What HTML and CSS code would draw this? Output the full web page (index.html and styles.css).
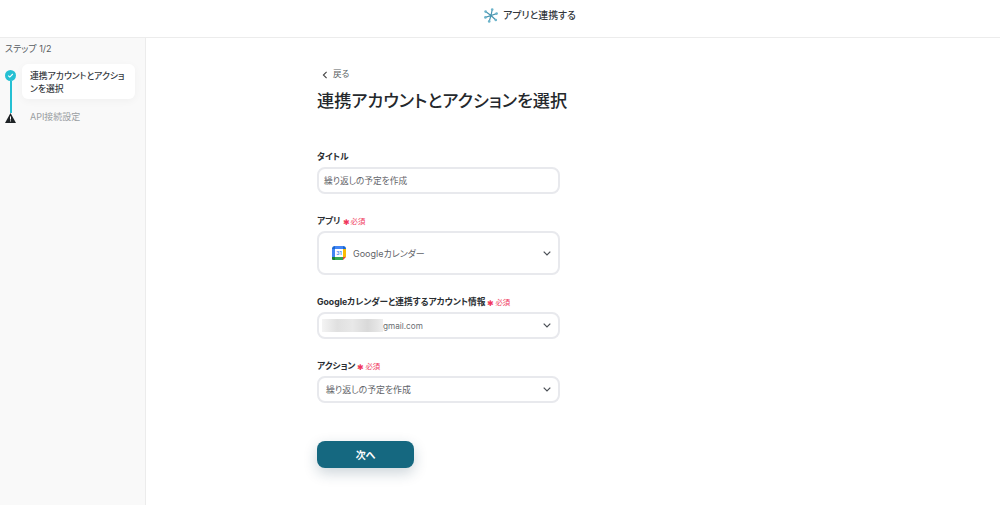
FILE: index.html
```html
<!DOCTYPE html>
<html lang="ja">
<head>
<meta charset="utf-8">
<title>アプリと連携する</title>
<link rel="stylesheet" href="styles.css">
</head>
<body>
<header class="topbar">
  <svg class="logo" width="14" height="15" viewBox="0 0 14 15" aria-hidden="true">
    <g stroke="#4a95b0" stroke-width="1.2" stroke-linecap="round" fill="#6db4cb">
      <path d="M7 7.5 8.2 1.6M7 7.5 1.6 3.6M7 7.5 12.6 5.6M7 7.5 1.4 9.4M7 7.5 5.2 13.4M7 7.5 11.8 12" fill="none"/>
    </g>
    <g fill="#6db4cb">
      <circle cx="8.2" cy="1.6" r="1.3"/><circle cx="1.6" cy="3.6" r="1.3"/><circle cx="12.6" cy="5.6" r="1.3"/><circle cx="1.4" cy="9.4" r="1.3"/><circle cx="5.2" cy="13.4" r="1.3"/><circle cx="11.8" cy="12" r="1.3"/>
    </g>
  </svg>
  <span class="topbar-title">アプリと連携する</span>
</header>
<div class="layout">
  <aside class="sidebar">
    <div class="step-count">ステップ 1/2</div>
    <ol class="steps">
      <li class="step step-active">
        <span class="step-marker">
          <svg width="11" height="11" viewBox="0 0 11 11" aria-hidden="true"><circle cx="5.5" cy="5.5" r="5.5" fill="#25c0d3"/><path d="M3.2 5.6 4.8 7.1 7.8 4" fill="none" stroke="#fff" stroke-width="1.1"/></svg>
          <span class="step-line"></span>
        </span>
        <div class="step-card">連携アカウントとアクションを選択</div>
      </li>
      <li class="step">
        <span class="step-marker">
          <svg width="11" height="10" viewBox="0 0 11 10" aria-hidden="true"><path d="M5.5 0 11 10H0Z" fill="#1f2326"/><path d="M5.5 3.4v3.2M5.5 7.4v1" stroke="#fff" stroke-width="1"/></svg>
        </span>
        <div class="step-plain">API接続設定</div>
      </li>
    </ol>
  </aside>
  <main class="main">
    <div class="form">
      <a class="back"><svg width="6" height="8" viewBox="0 0 6 8" aria-hidden="true"><path d="M4.6.8 1.4 4l3.2 3.2" fill="none" stroke="#444" stroke-width="1.1"/></svg>戻る</a>
      <h1 class="heading">連携アカウントとアクションを選択</h1>
      <div class="field field-title">
        <label class="label">タイトル</label>
        <div class="box box-input">繰り返しの予定を作成</div>
      </div>
      <div class="field">
        <label class="label">アプリ<span class="req"><i>✱</i>必須</span></label>
        <div class="box box-app">
          <span class="app">
            <svg width="14" height="14" viewBox="0 0 14 14" aria-hidden="true">
              <path d="M3 0h8v3H3z" fill="#4285f4"/><path d="M0 3a3 3 0 0 1 3-3v3z" fill="#1967d2"/>
              <path d="M0 3h3v8H0z" fill="#4285f4"/><path d="M11 3h3v8h-3z" fill="#fbbc04"/>
              <path d="M3 11h8v3H3z" fill="#34a853"/><path d="M0 11h3v3H1a1 1 0 0 1-1-1z" fill="#188038"/>
              <path d="M11 0a3 3 0 0 1 3 3h-3z" fill="#1967d2"/><path d="M11 14v-3h3z" fill="#ea4335"/>
              <path d="M3 3h8v8H3z" fill="#fff"/>
              <text x="7" y="9" class="cal-num" text-anchor="middle">31</text>
            </svg>
            Googleカレンダー
          </span>
          <svg class="chev" width="8" height="5" viewBox="0 0 8 5" aria-hidden="true"><path d="M.7.7 4 4 7.3.7" fill="none" stroke="#4a4f55" stroke-width="1.2"/></svg>
        </div>
      </div>
      <div class="field">
        <label class="label">Googleカレンダーと連携するアカウント情報<span class="req"><i>✱</i>必須</span></label>
        <div class="box box-account">
          <span class="mail"><span class="blur"></span>gmail.com</span>
          <svg class="chev" width="8" height="5" viewBox="0 0 8 5" aria-hidden="true"><path d="M.7.7 4 4 7.3.7" fill="none" stroke="#4a4f55" stroke-width="1.2"/></svg>
        </div>
      </div>
      <div class="field">
        <label class="label">アクション<span class="req"><i>✱</i>必須</span></label>
        <div class="box box-select">繰り返しの予定を作成
          <svg class="chev" width="8" height="5" viewBox="0 0 8 5" aria-hidden="true"><path d="M.7.7 4 4 7.3.7" fill="none" stroke="#4a4f55" stroke-width="1.2"/></svg>
        </div>
      </div>
      <button class="next">次へ</button>
    </div>
  </main>
</div>
</body>
</html>
```
FILE: styles.css
```css
* { box-sizing: border-box; }
html, body { margin: 0; padding: 0; background: #fff; }
body {
  width: 1000px;
  height: 509px;
  overflow: hidden;
  font-family: Inter, "Noto Sans CJK JP", sans-serif;
  font-feature-settings: "palt";
  color: #2e3338;
}
.topbar {
  height: 38px;
  border-bottom: 1px solid #ececec;
  display: flex;
  align-items: flex-start;
  justify-content: center;
  gap: 5px;
  padding: 8px 0 0 60px;
}
.logo { flex: none; }
.topbar-title { font-size: 9.9px; line-height: 14px; font-weight: 500; color: #33383d; }
.layout { display: flex; height: 467px; }
.sidebar {
  width: 146px;
  background: #f9f9f9;
  border-right: 1px solid #ececec;
  padding: 4px 0 0 5px;
  flex: none;
}
.step-count { font-size: 9px; line-height: 13px; color: #555b61; }
.steps { list-style: none; margin: 9px 0 0; padding: 0; }
.step { display: flex; gap: 6px; }
.step-marker { width: 11px; flex: none; display: flex; flex-direction: column; align-items: center; padding-top: 3px; }
.step-marker svg { flex: none; display: block; }
.step-line { width: 2px; flex: 1; margin-bottom: -3px; background: #25c0d3; }
.step-active { height: 46px; }
.step-active .step-marker { padding-top: 6px; }
.step-card {
  width: 113px;
  height: 35px;
  background: #fff;
  border-radius: 6px;
  padding: 5px 8px;
  font-size: 8.8px;
  line-height: 13px;
  font-weight: 500;
  color: #34393e;
  box-shadow: 0 2px 8px rgba(0,0,0,.04);
}
.step-plain { font-size: 9px; line-height: 13px; color: #9a9ea2; padding-left: 8px; }
.main { flex: 1; padding: 30px 0 0 171px; }
.form { width: 243px; }
.back { display: flex; align-items: center; gap: 5px; font-size: 8.6px; line-height: 13px; color: #5a5f64; padding-left: 5px; }
.heading { margin: 7px 0 0; font-size: 17.2px; line-height: 26px; font-weight: 500; color: #24282c; white-space: nowrap; }
.field { margin-top: 21px; }
.field-title { margin-top: 37px; }
.label { display: flex; align-items: center; font-size: 8.7px; line-height: 13px; font-weight: 700; color: #2a2e32; white-space: nowrap; }
.req { margin-left: 2px; color: #f0385c; font-size: 7.4px; font-weight: 400; display: inline-flex; align-items: center; gap: 1px; }
.req i { font-style: normal; font-size: 8px; line-height: 8px; }
.box {
  margin-top: 3px;
  border: 2px solid #e8e9ed;
  border-radius: 8px;
  background: #fff;
  display: flex;
  align-items: center;
  justify-content: space-between;
  height: 27px;
  font-size: 8.7px;
  color: #5f6368;
}
.box-input { padding-left: 5px; }
.box-app { height: 44px; padding: 0 7px 0 13px; }
.app { display: flex; align-items: center; gap: 7px; font-size: 9px; }
.cal-num { font-size: 5px; font-weight: 700; fill: #4285f4; }
.box-account { padding: 0 7px 0 3px; }
.mail { display: flex; align-items: center; color: #6a6e72; font-size: 8.2px; }
.blur { width: 61px; height: 13px; background: linear-gradient(90deg,#f4f4f4,#e0e0e0 25%,#e8e8e8 50%,#d9d9d9 75%,#e4e4e4 90%,#eee); }
.box-select { padding: 0 7px; font-size: 8.9px; }
.next {
  display: block;
  margin-top: 38px;
  width: 97px;
  height: 27px;
  border: none;
  border-radius: 8px;
  background: #156880;
  color: #fff;
  font: inherit;
  font-size: 10px;
  font-weight: 700;
  box-shadow: 0 5px 14px rgba(21,60,80,.22);
}
```
